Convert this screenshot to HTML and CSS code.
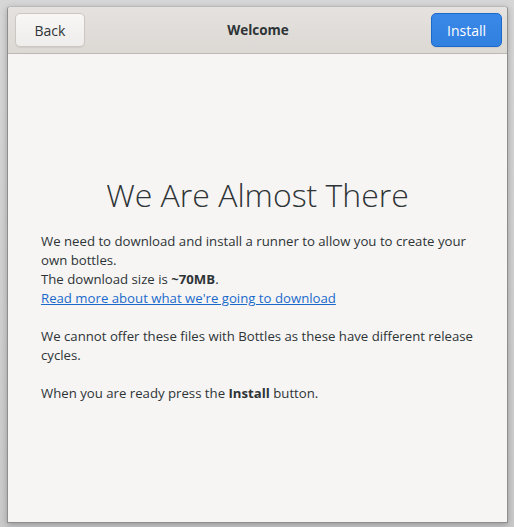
FILE: index.html
```html
<!DOCTYPE html>
<html>
<head>
<meta charset="utf-8">
<link rel="stylesheet" href="styles.css">
</head>
<body>
<div class="window">
  <header class="headerbar">
    <button class="btn">Back</button>
    <div class="title">Welcome</div>
    <button class="btn suggested">Install</button>
  </header>
  <main class="content">
    <h1 class="heading">We Are Almost There</h1>
    <p>We need to download and install a runner to allow you to create your own bottles.<br>
    The download size is <b>~70MB</b>.<br>
    <a href="#" class="link">Read more about what we're going to download</a></p>
    <p>We cannot offer these files with Bottles as these have different release cycles.</p>
    <p>When you are ready press the <b>Install</b> button.</p>
  </main>
</div>
</body>
</html>
```
FILE: styles.css
```css
html, body {
  margin: 0;
  padding: 0;
}
body {
  width: 514px;
  height: 527px;
  background: linear-gradient(to bottom, #d6d6d6, #cacaca);
  font-family: "Open Sans", "Noto Sans", sans-serif;
  color: #2e3436;
  overflow: hidden;
}
.window {
  box-sizing: border-box;
  margin: 6px 0 0 7px;
  width: 501px;
  height: 517px;
  border: 1px solid #8e8e8e;
  border-top-color: #b8b8b8;
  border-radius: 4px 4px 0 0;
  background: #f6f5f4;
  display: flex;
  flex-direction: column;
  box-shadow: 0 2px 6px rgba(0,0,0,0.25);
}
.headerbar {
  box-sizing: border-box;
  height: 47px;
  flex: none;
  display: flex;
  align-items: center;
  justify-content: space-between;
  padding: 0 5px 0 7px;
  background: linear-gradient(to bottom, #e5e2df, #dcd8d4);
  border-bottom: 1px solid #bfb8b1;
  border-radius: 3px 3px 0 0;
}
.btn {
  box-sizing: border-box;
  height: 34px;
  width: 70px;
  border-radius: 5px;
  border: 1px solid #cdc7c2;
  background: linear-gradient(to bottom, #f8f7f6, #efedec);
  font-family: inherit;
  font-size: 14px;
  color: #2e3436;
  padding: 0;
  box-shadow: 0 1px 1px rgba(0,0,0,0.06);
}
.btn.suggested {
  width: 71px;
  background: linear-gradient(to bottom, #3a88e8, #3080e0);
  border-color: #1b6acb;
  color: #ffffff;
}
.title {
  font-weight: bold;
  font-size: 13.5px;
  color: #2e3436;
}
.content {
  padding: 0 33px;
  font-size: 13.2px;
  line-height: 19px;
}
.heading {
  margin: 121px 0 17px;
  text-align: center;
  font-weight: 300;
  font-size: 32px;
  line-height: 40px;
  color: #2e3436;
}
.content p {
  margin: 0 0 19px;
}
.content b {
  font-weight: bold;
}
.link {
  color: #1b6acb;
  text-decoration: underline;
}
```
